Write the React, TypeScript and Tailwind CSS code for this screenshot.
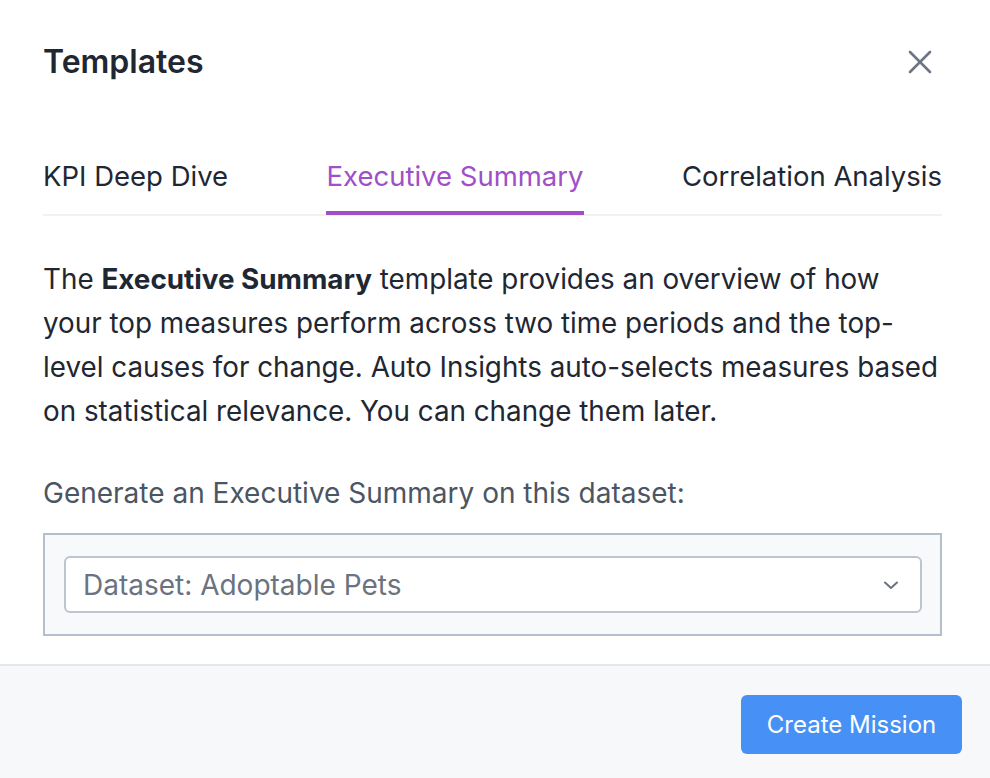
import React from "react";

export default function App() {
  const tabs = ["KPI Deep Dive", "Executive Summary", "Correlation Analysis"];
  const active = 1;
  return (
    <div
      className="w-[990px] h-[778px] flex flex-col bg-white text-[#1f2733]"
      style={{ fontFamily: "Inter, 'Noto Sans', sans-serif" }}
    >
      <div className="pl-[43px] pr-[48px] pb-[28px]">
        <div className="flex items-center justify-between pt-[44px] h-[80px]">
          <h1 className="text-[32px] leading-[36px] font-semibold text-[#1f2733]">Templates</h1>
          <button className="w-[24px] h-[24px] mr-[10px] text-[#6b7684]">
            <svg viewBox="0 0 24 24" width="24" height="24" fill="none" stroke="currentColor" strokeWidth="2.6" strokeLinecap="round">
              <path d="M2 2L22 22M22 2L2 22" />
            </svg>
          </button>
        </div>
        <div className="mt-[80px] flex justify-between border-b-2 border-[#f0f1f3]">
          {tabs.map((t, i) => (
            <div
              key={t}
              className={
                i === active
                  ? "text-[27.5px] leading-[32px] pb-[19px] border-b-[4px] border-[#a04fc8] text-[#a04fc8] -mb-[1px]"
                  : "text-[27.5px] leading-[32px] pb-[19px] border-b-[4px] border-transparent text-[#1f2733] -mb-[1px]"
              }
            >
              {t}
            </div>
          ))}
        </div>
        <p className="mt-[41px] w-[898px] text-[27.8px] leading-[44px] text-[#1f2733]">
          The <span className="font-bold">Executive Summary</span> template provides an overview of how
          your top measures perform across two time periods and the top-level causes for change. Auto
          Insights auto-selects measures based on statistical relevance. You can change them later.
        </p>
        <p className="mt-[38px] text-[28px] leading-[44px] text-[#4b5563]">
          Generate an Executive Summary on this dataset:
        </p>
        <div className="mt-[18px] border-2 border-[#b3bfcc] bg-[#f7f9fb] pl-[19px] pr-[18px] py-[21px]">
          <div className="h-[57px] flex items-center justify-between bg-white border-2 border-[#bcc5d0] rounded-[6px] pl-[17px] pr-[21px]">
            <span className="text-[28px] leading-[32px] text-[#6b7280]">Dataset: Adoptable Pets</span>
            <svg viewBox="0 0 16 16" width="16" height="16" fill="none" stroke="#6b7280" strokeWidth="2" strokeLinecap="round" strokeLinejoin="round">
              <path d="M2 5.5L8 11L14 5.5" />
            </svg>
          </div>
        </div>
      </div>
      <div className="flex-1 bg-[#f7f8fa] border-t-2 border-[#e4e7eb] flex justify-end items-start pt-[29px] pr-[28px]">
        <button className="h-[59px] w-[221px] rounded-[6px] bg-[#4790f5] text-white text-[24px] leading-[32px]">
          Create Mission
        </button>
      </div>
    </div>
  );
}
